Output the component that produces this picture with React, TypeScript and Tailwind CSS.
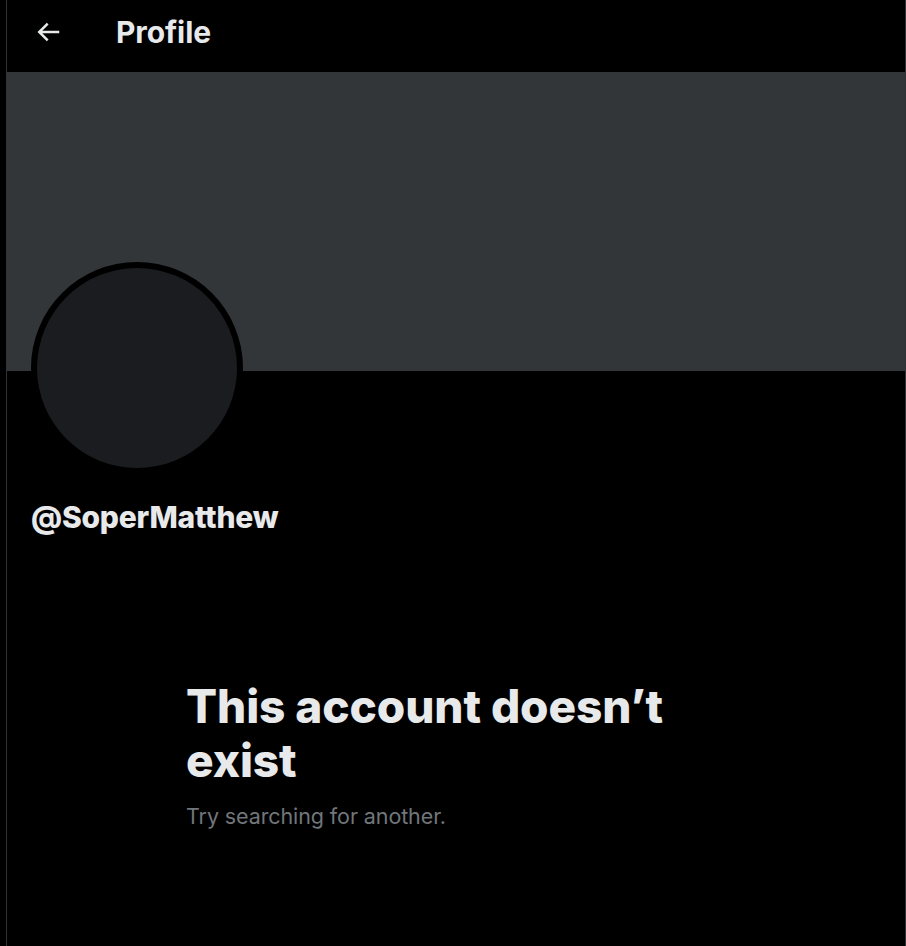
import React from "react";

export default function App() {
  const font = { fontFamily: '"Inter", "Liberation Sans", sans-serif' };
  return (
    <div className="w-[906px] min-h-[946px] bg-black flex" style={font}>
      <div className="ml-[6px] w-[900px] min-h-[946px] border-x border-[#2f3336] flex flex-col">
        <header className="h-[72px] flex items-center pb-[8px] pl-[26px]">
          <svg viewBox="0 0 24 24" className="w-[30px] h-[30px]" fill="#e7e9ea">
            <path d="M7.414 13l5.043 5.04-1.414 1.42L3.586 12l7.457-7.46 1.414 1.42L7.414 11H21v2H7.414z" />
          </svg>
          <h1 className="ml-[53px] text-[30px] leading-[36px] font-bold text-[#e7e9ea] tracking-[-0.1px]">
            Profile
          </h1>
        </header>
        <div className="h-[299px] bg-[#333639]" />
        <div className="px-[24px]">
          <div className="-mt-[109px] w-[212px] h-[212px] rounded-full bg-black p-[6px]">
            <div className="w-full h-full rounded-full bg-[#1a1c1f]" />
          </div>
          <div className="mt-[25px] text-[30px] leading-[36px] font-extrabold text-[#e7e9ea] tracking-[-0.2px]">
            @SoperMatthew
          </div>
        </div>
        <div className="mt-[144px] mx-auto w-[540px]">
          <div className="text-[46px] leading-[54px] font-extrabold text-[#e7e9ea] tracking-[-0.1px]">
            This account doesn’t exist
          </div>
          <div className="mt-[14px] text-[21.5px] leading-[30px] text-[#71767b] tracking-[-0.1px]">
            Try searching for another.
          </div>
        </div>
      </div>
    </div>
  );
}
